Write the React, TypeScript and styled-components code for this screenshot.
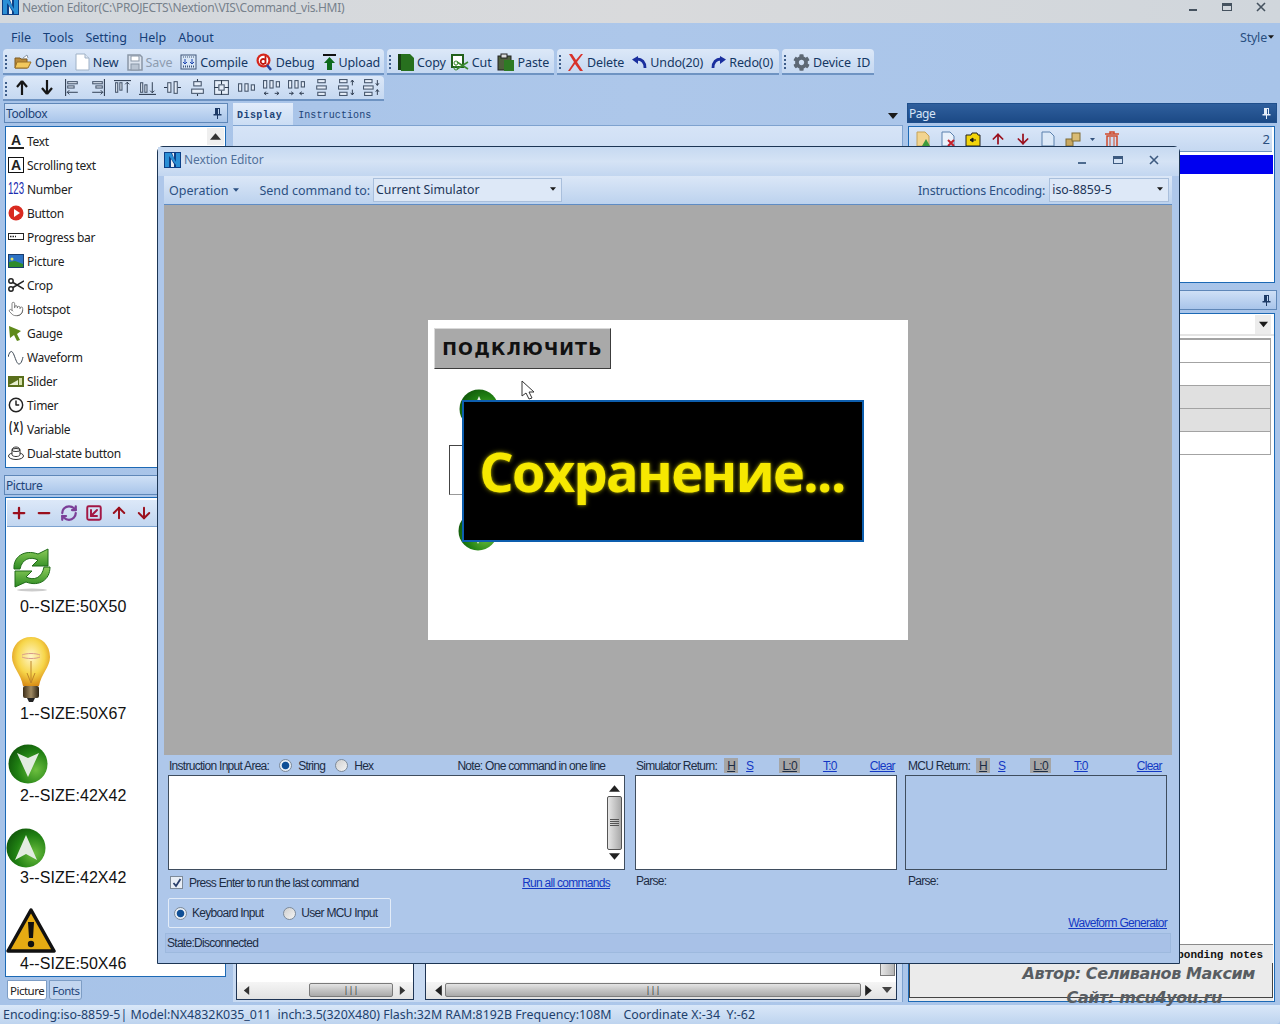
import React from 'react'
import styled, { createGlobalStyle } from 'styled-components'
import { ArrowDown, ArrowUp, Clock3, Minus, Plus, Pointer, RefreshCw, SquareArrowDownLeft } from 'lucide-react'
import { FaCog } from 'react-icons/fa'

const Global = createGlobalStyle`
  html, body { margin: 0; padding: 0; background: #a9c4e8; }
  * { box-sizing: border-box; }
`

const Root = styled.div`
  position: relative;
  width: 1280px;
  height: 1024px;
  overflow: hidden;
  display: flex;
  flex-direction: column;
  background: linear-gradient(90deg, #a7c3e8, #adc7ea 50%, #a8c4e9);
  font-family: 'Noto Sans', sans-serif;
  color: #15396f;
`

const TitleBar = styled.div`
  height: 23px;
  flex: none;
  display: flex;
  align-items: center;
  padding: 0 0 9px 2px;
  gap: 3px;
  line-height: 13px;
  background: linear-gradient(90deg, #d3d8dd, #d9dadc 50%, #d0d6dc);
  color: #77818c;
  font-size: 12px;
  letter-spacing: -0.32px;
`

const WinButtons = styled.div<{ $gap: number; $right?: number }>`
  margin-left: auto;
  margin-right: ${p => p.$right ?? 0}px;
  display: flex;
  align-items: center;
  gap: ${p => p.$gap}px;
`

const MenuBar = styled.div`
  height: 26px;
  flex: none;
  display: flex;
  align-items: center;
  padding: 2px 6px 0 11px;
  font-size: 12.5px;
  color: #153e78;
`

const MenuItem = styled.span`
  margin-right: 12px;
`

const StyleMenu = styled.span`
  margin-left: auto;
  font-size: 12.5px;
  letter-spacing: -0.2px;
  color: #2a4f80;
  display: flex;
  align-items: center;
  gap: 1px;
`

const ToolRow = styled.div`
  height: 27px;
  flex: none;
  display: flex;
  gap: 3px;
  padding-left: 3px;
`

const ToolGroup = styled.div<{ $width: number; $gap?: number }>`
  width: ${p => p.$width}px;
  height: 26px;
  display: flex;
  align-items: center;
  gap: ${p => p.$gap ?? 8}px;
  padding: 2px 0 0 11px;
  position: relative;
  border-radius: 4px 4px 0 0;
  border-bottom: 2px solid #6e93c2;
  background: linear-gradient(#dce8f8, #c5d8f1);
  font-size: 12.5px;
  color: #143763;
  letter-spacing: -0.12px;
  &::before {
    content: '';
    position: absolute;
    left: 2px;
    top: 6px;
    height: 14px;
    border-left: 2px dotted #3d5d8a;
  }
`

const ToolItem = styled.span<{ $muted?: boolean }>`
  display: flex;
  align-items: center;
  gap: 3px;
  white-space: pre;
  color: ${p => (p.$muted ? '#8d9cb0' : 'inherit')};
`

const AlignGroup = styled(ToolGroup)`
  gap: 0;
  padding: 0 0 0 7px;
  height: 25px;
`

const AlignSlot = styled.span`
  width: 25px;
  display: flex;
  justify-content: center;
`

const Dock = styled.div`
  flex: 1;
  min-height: 0;
  display: grid;
  grid-template-columns: 230px 1fr 373px;
`

const Column = styled.div`
  display: flex;
  flex-direction: column;
  min-height: 0;
`

const PanelHeader = styled.div<{ $active?: boolean }>`
  height: 20px;
  flex: none;
  display: flex;
  align-items: center;
  justify-content: space-between;
  padding: 0 5px 0 1px;
  border: 1px solid ${p => (p.$active ? '#1f4f8c' : '#5f87b8')};
  font-size: 12px;
  letter-spacing: -0.45px;
  color: ${p => (p.$active ? '#d5e4f7' : '#1d4478')};
  background: ${p => (p.$active ? 'linear-gradient(#2f5f9d, #1c4a86)' : 'linear-gradient(#cfe0f6, #a9c5ea)')};
`

const LeftColumn = styled(Column)`
  padding-left: 4px;
  padding-right: 2px;
`

const ToolboxList = styled.div`
  height: 342px;
  margin: 3px 2px 0 1px;
  flex: none;
  position: relative;
  padding-top: 2px;
  background: #fff;
  border: 1px solid #1c69b5;
`

const ScrollUp = styled.span`
  position: absolute;
  right: 1px;
  top: 1px;
  width: 17px;
  height: 17px;
  display: flex;
  align-items: center;
  justify-content: center;
  background: #efefef;
`

const ToolboxRow = styled.div`
  height: 24px;
  display: flex;
  align-items: center;
  gap: 3px;
  padding-left: 2px;
  font-size: 12px;
  letter-spacing: -0.3px;
  color: #222;
`

const IconSlot = styled.span`
  width: 16px;
  height: 16px;
  display: flex;
  align-items: center;
  justify-content: flex-start;
  flex: none;
`

const LetterIcon = styled.span<{ $boxed?: boolean }>`
  width: 16px;
  height: 16px;
  display: flex;
  align-items: center;
  justify-content: center;
  font-family: 'Liberation Sans', sans-serif;
  font-weight: 700;
  font-size: 14px;
  line-height: 13px;
  letter-spacing: 0;
  color: #222;
  border: ${p => (p.$boxed ? '1px solid #111' : '0')};
  border-bottom: ${p => (p.$boxed ? '1px solid #111' : '2px solid #222')};
`

const NarrowGlyphs = styled.span<{ $mono?: boolean; $color: string }>`
  flex: none;
  display: inline-block;
  width: 27px;
  margin-right: -11px;
  font-family: ${p => (p.$mono ? "'Liberation Mono', monospace" : "'Liberation Sans', sans-serif")};
  font-weight: ${p => (p.$mono ? 700 : 400)};
  font-size: ${p => (p.$mono ? 15 : 16)}px;
  line-height: 16px;
  letter-spacing: 0;
  color: ${p => p.$color};
  transform: scaleX(0.6);
  transform-origin: left center;
`

const PictureHeader = styled(PanelHeader)`
  margin-top: 7px;
`

const PicturePanel = styled.div`
  height: 480px;
  margin: 2px 2px 0 1px;
  flex: none;
  overflow: hidden;
  background: #fff;
  border: 1px solid #1c69b5;
`

const PictureTools = styled.div`
  height: 27px;
  margin: 2px 1px 0;
  display: flex;
  align-items: center;
  gap: 7px;
  padding-left: 3px;
  border-bottom: 1px solid #7da3d0;
  background: linear-gradient(#dce8f8, #c2d6f0);
`

const PictureItem = styled.div<{ $indent: number; $top: number }>`
  margin-top: ${p => p.$top}px;
  padding-left: ${p => p.$indent}px;
  svg { display: block; }
`

const PictureLabel = styled.div<{ $top: number; $indent: number }>`
  margin-top: ${p => p.$top}px;
  margin-left: ${p => p.$indent}px;
  font-family: 'Liberation Sans', sans-serif;
  font-size: 16px;
  line-height: 18px;
  letter-spacing: 0.05px;
  color: #111;
`

const BottomTabs = styled.div`
  display: flex;
  gap: 2px;
  margin: 3px 0 0 3px;
`

const BottomTab = styled.span<{ $active?: boolean }>`
  height: 20px;
  padding: 0 2px;
  display: flex;
  align-items: center;
  border: 1px solid #7d9dc5;
  border-radius: 0 0 3px 3px;
  font-size: 11.5px;
  letter-spacing: -0.5px;
  color: ${p => (p.$active ? '#222' : '#1d4478')};
  background: ${p => (p.$active ? '#fff' : '#c3d6ef')};
`

const MiddleColumn = styled(Column)`
  padding: 0 4px 3px 3px;
`

const TabStrip = styled.div`
  height: 22px;
  flex: none;
  display: flex;
  align-items: stretch;
  font-family: 'Liberation Mono', monospace;
  font-size: 10px;
  letter-spacing: 0.1px;
  position: relative;
`

const DocTab = styled.span<{ $active?: boolean }>`
  display: flex;
  align-items: center;
  padding: ${p => (p.$active ? '2px 11px 0 4px' : '2px 5px 0')};
  font-weight: ${p => (p.$active ? 700 : 400)};
  letter-spacing: ${p => (p.$active ? '0.45px' : '0.1px')};
  color: #1d4478;
  background: ${p => (p.$active ? 'linear-gradient(#e2ecfa, #cbddf4)' : 'transparent')};
`

const TabMenu = styled.span`
  position: absolute;
  right: 5px;
  top: 8px;
  display: flex;
`

const TabBody = styled.div`
  flex: 1;
  min-height: 0;
  display: flex;
  flex-direction: column;
  justify-content: flex-end;
  background: linear-gradient(#d6e4f7, #c8daf2 40px);
  border-top: 1px solid #7ea2cf;
  border-right: 1px solid #7ea2cf;
  padding-left: 3px;
`

const BottomPanes = styled.div`
  display: grid;
  grid-template-columns: 178px 472px;
  gap: 11px;
  margin-bottom: 2px;
  height: 120px;
`

const Pane = styled.div`
  position: relative;
  background: #fff;
  border: 1px solid #1f3555;
  border-top: 0;
`

const ScrollTrack = styled.div`
  position: absolute;
  left: 0;
  right: 0;
  bottom: 0;
  height: 17px;
  background: linear-gradient(#f5f5f5, #e2e2e2);
`

const HScroll = styled.div<{ $left: number; $right: number }>`
  position: absolute;
  left: ${p => p.$left}px;
  right: ${p => p.$right}px;
  bottom: 2px;
  height: 14px;
  display: flex;
  align-items: center;
  justify-content: center;
  border: 1px solid #7a7a7a;
  border-radius: 2px;
  background: linear-gradient(#e4e4e4, #c5c5c5 50%, #a9a9a9);
  font-size: 9px;
  line-height: 10px;
  color: #333;
`

const VScroll = styled.div`
  position: absolute;
  right: 1px;
  top: 0;
  bottom: 23px;
  width: 15px;
  border: 1px solid #7a7a7a;
  background: linear-gradient(90deg, #e6e6e6, #b5b5b5);
`

const ScrollArrow = styled.span<{ $left?: number; $right?: number; $bottom: number }>`
  position: absolute;
  bottom: ${p => p.$bottom}px;
  ${p => (p.$left !== undefined ? `left: ${p.$left}px;` : '')}
  ${p => (p.$right !== undefined ? `right: ${p.$right}px;` : '')}
  display: flex;
`

const RightColumn = styled(Column)`
  padding: 0 3px 3px 0;
`

const PageBody = styled.div`
  height: 157px;
  flex: none;
  margin: 3px 2px 0 1px;
  display: flex;
  flex-direction: column;
  background: #fff;
  border: 1px solid #1c69b5;
`

const PageTools = styled.div`
  height: 25px;
  flex: none;
  display: flex;
  align-items: center;
  gap: 9px;
  padding: 0 2px 0 6px;
  margin: 0 2px 3px 0;
  border-bottom: 1px solid #6e93c2;
  background: linear-gradient(#d9e6f8, #c5d8f1);
`

const PageCount = styled.span`
  margin-left: auto;
  font-size: 13px;
  color: #2a4f80;
`

const PageRow = styled.div`
  height: 19px;
  margin-right: 1px;
  background: #0000f0;
`

const AttrHeader = styled(PanelHeader)`
  margin-top: 7px;
`

const AttrBody = styled.div`
  flex: 1;
  min-height: 0;
  margin: 3px 2px 0 1px;
  display: flex;
  flex-direction: column;
  background: #fff;
  border: 1px solid #1c69b5;
`

const AttrCombo = styled.div`
  height: 22px;
  flex: none;
  display: flex;
  justify-content: flex-end;
  align-items: center;
  padding-right: 3px;
  border-bottom: 2px solid #e4e4e4;
`

const ComboArrow = styled.span`
  width: 16px;
  height: 19px;
  display: flex;
  align-items: center;
  justify-content: center;
  background: #ececec;
`

const AttrTable = styled.div`
  margin: 2px 3px 0 0;
  border: 1px solid #a3a3a3;
  border-top-width: 2px;
  border-bottom: 0;
`

const AttrRow = styled.div<{ $gray?: boolean }>`
  height: 23px;
  border-bottom: 1px solid #a3a3a3;
  background: ${p => (p.$gray ? '#e0e0e0' : '#fff')};
`

const NotesBox = styled.div`
  height: 56px;
  margin: auto 1px 0 0;
  flex: none;
  display: flex;
  flex-direction: column;
  position: relative;
  background: #ebebeb;
`

const NotesHead = styled.div`
  margin-top: -1px;
  padding: 4px 10px 0 0;
  height: 19px;
  text-align: right;
  border-top: 1px solid #8a8a8a;
  font-family: 'Liberation Mono', monospace;
  font-weight: 700;
  font-size: 11px;
  color: #111;
`

const NotesField = styled.div`
  flex: 1;
  margin-bottom: 3px;
  border-bottom: 1px solid #444;
  border-left: 1px solid #444;
  border-right: 1px solid #444;
`

const Watermark = styled.div<{ $right: number; $top: number }>`
  position: absolute;
  right: ${p => p.$right}px;
  top: ${p => p.$top}px;
  white-space: nowrap;
  font-family: 'DejaVu Sans', sans-serif;
  font-style: italic;
  font-weight: 700;
  font-size: 16px;
  letter-spacing: -0.4px;
  color: #585d62;
`

const StatusBar = styled.div`
  height: 19px;
  flex: none;
  display: flex;
  align-items: center;
  gap: 12px;
  padding-left: 3px;
  border-radius: 0 0 4px 0;
  background: linear-gradient(#d9e7f8, #bed4ef);
  font-size: 12.4px;
  color: #213f6c;
  white-space: pre;
`

const Dialog = styled.div`
  position: absolute;
  left: 157px;
  top: 146px;
  width: 1023px;
  height: 818px;
  display: flex;
  flex-direction: column;
  border: 1px solid #1c3554;
  border-radius: 6px 6px 0 0;
  background: #aec7ea;
  padding: 0 7px 0 6px;
`

const DialogTitle = styled.div`
  height: 29px;
  flex: none;
  margin: 0 -7px 0 -6px;
  padding: 0 20px 4px 6px;
  display: flex;
  align-items: center;
  gap: 3px;
  background: linear-gradient(#c6d9f1, #d5e3f5 50%, #c2d6f0);
  font-size: 12px;
  letter-spacing: -0.1px;
  color: #51719b;
`

const DialogTools = styled.div`
  height: 29px;
  flex: none;
  display: flex;
  align-items: center;
  padding: 0 3px 0 5px;
  border-bottom: 1px solid #5f8cc4;
  background: linear-gradient(#dbe7f7, #bcd2ee);
  font-size: 12.5px;
  color: #2b5082;
`

const Combo = styled.div<{ $width: number }>`
  width: ${p => p.$width}px;
  height: 24px;
  flex: none;
  display: flex;
  align-items: center;
  justify-content: space-between;
  padding: 0 5px 2px 2px;
  background: #dde8f7;
  border: 1px solid #a9bfdc;
  font-size: 12.3px;
  color: #1c3557;
`

const SpacedText = styled.span<{ $left?: number; $right?: number; $tight?: boolean }>`
  margin-left: ${p => p.$left ?? 0}px;
  margin-right: ${p => p.$right ?? 0}px;
  letter-spacing: ${p => (p.$tight ? '-0.2px' : '0')};
  white-space: nowrap;
  display: flex;
  align-items: center;
  gap: 5px;
`

const Canvas = styled.div`
  height: 550px;
  flex: none;
  display: flex;
  align-items: center;
  justify-content: center;
  background: #a9a9a9;
`

const Screen = styled.div`
  position: relative;
  width: 480px;
  height: 320px;
  background: #fff;
`

const ConnectButton = styled.div`
  position: absolute;
  left: 6px;
  top: 8px;
  width: 177px;
  height: 41px;
  display: flex;
  align-items: center;
  justify-content: center;
  white-space: nowrap;
  background: #a9a9a9;
  border: 1px solid #d9d9d9;
  border-right-color: #3c3c3c;
  border-bottom-color: #3c3c3c;
  font-family: 'DejaVu Sans', sans-serif;
  font-weight: 700;
  font-size: 17.5px;
  letter-spacing: 1.2px;
  color: #111;
`

const CanvasIcon = styled.div<{ $left: number; $top: number }>`
  position: absolute;
  left: ${p => p.$left}px;
  top: ${p => p.$top}px;
  line-height: 0;
`

const FieldBox = styled.div`
  position: absolute;
  left: 21px;
  top: 125px;
  width: 40px;
  height: 50px;
  border: 1px solid #444;
  border-right: 0;
  border-bottom-color: #999;
`

const SaveOverlay = styled.div`
  position: absolute;
  left: 34px;
  top: 80px;
  width: 402px;
  height: 142px;
  display: flex;
  align-items: center;
  justify-content: center;
  padding: 0 2px 1px 0;
  background: #000;
  border: 2px solid #0d5eae;
  font-family: 'Open Sans', sans-serif;
  font-weight: 700;
  font-size: 54px;
  letter-spacing: -1.6px;
  color: #f6e800;
  text-shadow: 0 0 5px #8d8a00, 0 0 2px #8d8a00;
`

const Lower = styled.div`
  flex: 1;
  min-height: 0;
  display: flex;
  padding: 3px 0 0 4px;
  font-family: 'Liberation Sans', sans-serif;
  font-size: 12px;
  letter-spacing: -0.72px;
  color: #1c2c44;
`

const LowerColumn = styled.div<{ $width: number; $left?: number }>`
  width: ${p => p.$width}px;
  margin-left: ${p => p.$left ?? 0}px;
  flex: none;
  display: flex;
  flex-direction: column;
  min-height: 0;
`

const AreaHead = styled.div<{ $pad?: number }>`
  height: 17px;
  flex: none;
  display: flex;
  align-items: center;
  white-space: nowrap;
  padding: 0 0 2px ${p => p.$pad ?? 1}px;
`

const Gap = styled.span<{ $width: number }>`
  width: ${p => p.$width}px;
  flex: none;
`

const Radio = styled.span<{ $checked?: boolean }>`
  width: 13px;
  height: 13px;
  flex: none;
  border-radius: 50%;
  border: 1px solid #7d8a99;
  background: ${p =>
    p.$checked ? 'radial-gradient(circle, #0f4f96 0 3.4px, #e6edf5 4.2px)' : 'linear-gradient(135deg, #cfcfcf, #f4f4f4)'};
`

const HeadLink = styled.span<{ $shade?: boolean; $left: number }>`
  margin-left: ${p => p.$left}px;
  padding: 0 ${p => (p.$shade ? 3 : 0)}px;
  height: 15px;
  display: inline-flex;
  align-items: center;
  text-decoration: underline;
  color: ${p => (p.$shade ? '#1c2c44' : '#1338c4')};
  background: ${p => (p.$shade ? '#a5a5a5' : 'transparent')};
`

const OutputBox = styled.div<{ $tinted?: boolean }>`
  height: 95px;
  flex: none;
  position: relative;
  border: 1px solid #3f4d5e;
  background: ${p => (p.$tinted ? '#aec7ea' : '#fff')};
`

const InputScroll = styled.div`
  position: absolute;
  right: 1px;
  top: 1px;
  bottom: 1px;
  width: 17px;
  display: flex;
  flex-direction: column;
  align-items: center;
  justify-content: space-between;
  padding: 6px 0;
`

const InputThumb = styled.div`
  width: 15px;
  height: 54px;
  display: flex;
  flex-direction: column;
  align-items: center;
  justify-content: center;
  gap: 1px;
  border: 1px solid #555;
  border-radius: 2px;
  background: linear-gradient(90deg, #e6e6e6, #a9a9a9);
  span {
    width: 9px;
    height: 1px;
    background: #555;
  }
`

const CheckRow = styled.div`
  margin-top: 4px;
  height: 17px;
  display: flex;
  align-items: center;
  padding: 0 15px 0 2px;
  gap: 6px;
`

const CheckBox = styled.span`
  width: 13px;
  height: 13px;
  flex: none;
  display: flex;
  align-items: center;
  justify-content: center;
  border: 1px solid #7d8a99;
  background: #e8eef6;
`

const BlueLink = styled.span`
  margin-left: auto;
  color: #1338c4;
  text-decoration: underline;
`

const InputMode = styled.div`
  margin-top: 7px;
  width: 223px;
  height: 30px;
  display: flex;
  align-items: center;
  padding-left: 5px;
  border: 1px solid #e3ecf8;
  border-radius: 2px;
`

const ModeLabel = styled.span`
  margin-left: 5px;
`

const ParseLabel = styled.div<{ $pad: number }>`
  margin-top: 4px;
  padding-left: ${p => p.$pad}px;
`

const WaveLink = styled(BlueLink)`
  margin-top: auto;
  margin-bottom: 3px;
`

const StateBar = styled.div`
  height: 20px;
  flex: none;
  margin: 0 0 10px 1px;
  width: 1006px;
  display: flex;
  align-items: center;
  padding-left: 1px;
  border: 1px solid #9db9de;
  background: #a8c1e7;
  font-family: 'Liberation Sans', sans-serif;
  font-size: 12px;
  letter-spacing: -0.72px;
  color: #1c2c44;
`

const Cursor = styled.svg`
  position: absolute;
  left: 93px;
  top: 60px;
`

/* icons */

const Logo = () => (
  <svg width="17" height="16" viewBox="0 0 17 16">
    <rect width="17" height="16" fill="#0c3f86" />
    <path d="M1 1h4v14H1zM12 1h4v14h-4z" fill="#2a8fd6" />
    <path d="M5 1h2l5 9v3L5 4z" fill="#2a8fd6" />
    <path d="M7 7l3 5v3H7zM8 1h2v5z" fill="#e8eef6" />
  </svg>
)

type Dir = 'up' | 'down' | 'left' | 'right'

const trianglePaths: Record<Dir, string> = {
  down: 'M0 2h10L5 8z',
  up: 'M0 8h10L5 2z',
  left: 'M8 0v10L2 5z',
  right: 'M2 0v10l6-5z',
}

const Triangle = ({ dir = 'down', size = 7, color = '#1a1a1a' }: { dir?: Dir; size?: number; color?: string }) => (
  <svg width={size} height={size} viewBox="0 0 10 10">
    <path d={trianglePaths[dir]} fill={color} />
  </svg>
)

const PinIcon = ({ color }: { color: string }) => (
  <svg width="9" height="12" viewBox="0 0 9 12">
    <path d="M2 1h5v6h1.500v1.500H5V12H4V8.500H.5V7H2zM5 2v5h1V2z" fill={color} />
  </svg>
)

const MinIcon = ({ color }: { color: string }) => (
  <svg width="10" height="10" viewBox="0 0 10 10">
    <rect x="1" y="7" width="8" height="2" fill={color} />
  </svg>
)

const MaxIcon = ({ color }: { color: string }) => (
  <svg width="10" height="10" viewBox="0 0 10 10">
    <rect x=".5" y="1.500" width="9" height="7" fill="none" stroke={color} />
    <rect x=".5" y="1.500" width="9" height="2.500" fill={color} />
  </svg>
)

const CloseIcon = ({ color }: { color: string }) => (
  <svg width="10" height="10" viewBox="0 0 10 10">
    <path d="M1 1l8 8M9 1L1 9" stroke={color} strokeWidth="1.600" />
  </svg>
)

const OpenIcon = () => (
  <svg width="18" height="16" viewBox="0 0 18 16">
    <path d="M1 4h5l1 1h6v9H1z" fill="#b98a3a" stroke="#7d5a22" />
    <path d="M3 8h14l-3 6H1z" fill="#f2c85c" stroke="#9a7026" />
    <path d="M9 4l4-3 1 3" fill="#fff" stroke="#8a97a7" />
  </svg>
)

const NewIcon = () => (
  <svg width="15" height="18" viewBox="0 0 15 18">
    <path d="M1 1h9l4 4v12H1z" fill="#fff" stroke="#9fb1c6" />
    <path d="M10 1v4h4" fill="#dfe7f1" stroke="#9fb1c6" />
  </svg>
)

const SaveIcon = () => (
  <svg width="16" height="17" viewBox="0 0 16 17">
    <path d="M1 1h12l2 2v13H1z" fill="#dbe3ee" stroke="#8a97a7" strokeWidth="1.500" />
    <rect x="4" y="2" width="8" height="5" fill="#fff" stroke="#8a97a7" />
    <rect x="4" y="10" width="8" height="6" fill="#b9c4d2" stroke="#8a97a7" />
  </svg>
)

const CompileIcon = () => (
  <svg width="17" height="16" viewBox="0 0 17 16">
    <rect x="1" y="1" width="15" height="14" fill="#d8e6f6" stroke="#41577b" />
    <path d="M3 3h11" stroke="#41577b" strokeDasharray="1 1" />
    <path d="M5 5v4M12 5v4M3 8l2 2 2-2M10 8l2 2 2-2" stroke="#1f47b0" fill="none" />
    <path d="M3 12.500h11" stroke="#41577b" strokeDasharray="1 1" strokeWidth="2" />
  </svg>
)

const DebugIcon = () => (
  <svg width="17" height="18" viewBox="0 0 17 18">
    <circle cx="7.500" cy="7.500" r="7" fill="#d5261c" />
    <circle cx="7.500" cy="7.500" r="4.800" fill="#fff" />
    <path d="M9.500 3v8M9.500 7.500a2.500 2.500 0 1 0 0 2" fill="none" stroke="#c3170f" strokeWidth="1.800" />
    <path d="M11 12l4 5" stroke="#24439e" strokeWidth="2.500" />
  </svg>
)

const UploadIcon = () => (
  <svg width="13" height="17" viewBox="0 0 13 17">
    <rect y="0" width="13" height="2" fill="#111" />
    <path d="M6.500 3L12 9H9v7H4V9H1z" fill="#0d6a1c" />
  </svg>
)

const CopyIcon = () => (
  <svg width="16" height="18" viewBox="0 0 16 18">
    <rect x="0" y="1" width="3" height="16" fill="#173f12" />
    <path d="M3 1h9l4 4v13H3z" fill="#27701e" />
  </svg>
)

const CutIcon = () => (
  <svg width="18" height="17" viewBox="0 0 18 17">
    <rect x="1" y="1" width="11" height="12" fill="#fff" stroke="#21601b" strokeWidth="2" />
    <path d="M6 8l11 7M6 15L17 8" stroke="#3b8a30" strokeWidth="1.500" />
    <circle cx="5" cy="14" r="2" fill="none" stroke="#3b8a30" />
    <circle cx="5" cy="9" r="2" fill="none" stroke="#3b8a30" />
  </svg>
)

const PasteIcon = () => (
  <svg width="18" height="18" viewBox="0 0 18 18">
    <rect x="1" y="3" width="13" height="14" fill="#4f5f3d" stroke="#222" />
    <rect x="4" y="1" width="6" height="4" fill="#ddd" stroke="#222" />
    <path d="M7 7h10v11H7z" fill="#2f7a24" />
  </svg>
)

const DeleteIcon = () => (
  <svg width="16" height="18" viewBox="0 0 16 18">
    <path d="M1 1l3 0 4 6 5-6h2L9 9l6 9h-3L7 11l-5 7H0l6-9z" fill="#d8322a" />
  </svg>
)

const UndoIcon = ({ flip }: { flip?: boolean }) => (
  <svg width="15" height="13" viewBox="0 0 15 13" style={flip ? undefined : { transform: 'scaleX(-1)' }}>
    <path d="M2 12C2 6 5 3 10 3" fill="none" stroke="#1a2f9e" strokeWidth="2.800" />
    <path d="M9 0l6 3.500L9 8z" fill="#1a2f9e" />
  </svg>
)

const GearIcon = () => <FaCog size={17} color="#5d6874" />

const UpBold = () => (
  <svg width="14" height="15" viewBox="0 0 14 15">
    <path d="M7 1l5 6M7 1L2 7M7 1v14" stroke="#161616" strokeWidth="2.200" fill="none" />
  </svg>
)

const DownBold = () => (
  <svg width="14" height="15" viewBox="0 0 14 15">
    <path d="M7 14l5-6M7 14L2 8M7 0v14" stroke="#161616" strokeWidth="2.200" fill="none" />
  </svg>
)

type AlignShape = { rects: [number, number, number, number][]; lines?: string; fine?: string }

const alignShapes: AlignShape[] = [
  { rects: [[3, 2, 10, 3], [3, 6, 7, 3]], lines: 'M1.500 0v16', fine: 'M3 12.500h10M3 12.500l2-2M3 12.500l2 2' },
  { rects: [[3, 2, 10, 3], [6, 6, 7, 3]], lines: 'M14.500 0v16', fine: 'M3 12.500h10M13 12.500l-2-2M13 12.500l-2 2' },
  { rects: [[1, 3, 3, 10], [5, 3, 3, 8]], lines: 'M0 1.500h16', fine: 'M12.500 3v10M12.500 3l-2 2M12.500 3l2 2' },
  { rects: [[1, 3, 3, 10], [5, 5, 3, 8]], lines: 'M0 14.500h16', fine: 'M12.500 3v10M12.500 13l-2-2M12.500 13l2-2' },
  { rects: [[3, 3, 4, 10], [9, 2, 4, 12]], lines: 'M0 8h3M13 8h3' },
  { rects: [[4, 2, 8, 5], [2, 9, 12, 5]], lines: 'M8 0v2M8 14v2' },
  { rects: [[1, 1, 14, 14], [5, 5, 6, 6]], lines: 'M8 1v4M8 11v4M1 8h4M11 8h4' },
  { rects: [[0, 4, 4, 8], [6, 4, 4, 8], [12, 5, 4, 6]] },
  { rects: [[0, 1, 4, 8], [6, 1, 4, 8], [12, 2, 4, 6]], fine: 'M1 13.500h4M1 13.500l2-1.500M1 13.500l2 1.500M11 13.500h4M15 13.500l-2-1.500M15 13.500l-2 1.500' },
  { rects: [[0, 1, 4, 8], [6, 1, 4, 8], [12, 2, 4, 6]], fine: 'M1 13.500h4M5 13.500l-2-1.500M5 13.500l-2 1.500M11 13.500h4M11 13.500l2-1.500M11 13.500l2 1.500' },
  { rects: [[4, 0, 8, 4], [3, 6, 10, 4], [4, 12, 8, 4]] },
  { rects: [[1, 0, 8, 4], [0, 6, 10, 4], [1, 12, 8, 4]], fine: 'M13.500 1v5M13.500 1l-1.500 2M13.500 1l1.500 2M13.500 10v5M13.500 15l-1.500-2M13.500 15l1.500-2' },
  { rects: [[1, 0, 8, 4], [0, 6, 10, 4], [1, 12, 8, 4]], fine: 'M13.500 1v5M13.500 6l-1.500-2M13.500 6l1.500-2M13.500 10v5M13.500 10l-1.500 2M13.500 10l1.500 2' },
]

const AlignIcon = ({ shape }: { shape: AlignShape }) => (
  <svg width="17" height="17" viewBox="0 0 16 16">
    {shape.rects.map(([x, y, w, h], i) => (
      <rect key={i} x={x + 0.5} y={y + 0.5} width={w - 1} height={h - 1} fill="#e6eef9" stroke="#46566c" />
    ))}
    {shape.lines && <path d={shape.lines} stroke="#2c3a4e" fill="none" />}
    {shape.fine && <path d={shape.fine} stroke="#2c3a4e" fill="none" strokeWidth=".9" />}
  </svg>
)

const ButtonIcon = () => (
  <svg width="16" height="16" viewBox="0 0 16 16">
    <circle cx="8" cy="8" r="7.500" fill="#d92a20" />
    <path d="M6 4l6 4-6 4z" fill="#fff" />
  </svg>
)

const BarIcon = () => (
  <svg width="16" height="8" viewBox="0 0 16 8">
    <rect x=".5" y=".5" width="15" height="6" fill="#fff" stroke="#222" />
    <path d="M2 3.500h6" stroke="#222" strokeWidth="1.500" strokeDasharray="1.500 1" />
  </svg>
)

const SceneIcon = () => (
  <svg width="16" height="14" viewBox="0 0 16 14">
    <rect width="16" height="14" fill="#1b3d6e" />
    <rect x="1" y="1" width="14" height="12" fill="#2d72c4" />
    <path d="M1 8l6-1 8 3v3H1z" fill="#2f8b2c" />
    <circle cx="4" cy="5" r="1.500" fill="#e4e46a" />
  </svg>
)

const CropIcon = () => (
  <svg width="16" height="14" viewBox="0 0 16 14">
    <circle cx="3" cy="3" r="2.200" fill="none" stroke="#222" strokeWidth="1.500" />
    <circle cx="3" cy="11" r="2.200" fill="none" stroke="#222" strokeWidth="1.500" />
    <path d="M5 4.500L16 11M5 9.500L16 3" stroke="#222" strokeWidth="1.500" />
  </svg>
)

const GaugeIcon = () => (
  <svg width="14" height="15" viewBox="0 0 14 15">
    <path d="M1 0l12 5-4 3 3 6-3 1-3-6-4 3z" fill="#5f8a1a" />
  </svg>
)

const WaveIcon = () => (
  <svg width="16" height="16" viewBox="0 0 16 16">
    <path d="M0 8C2 1 4 1 6 6s3 9 5 9 3-3 4-7" fill="none" stroke="#3f4a56" />
  </svg>
)

const SliderIcon = () => (
  <svg width="16" height="11" viewBox="0 0 16 11">
    <rect width="16" height="11" fill="#5a6f1c" />
    <path d="M1 9l9-5v5z" fill="#e8efd0" />
    <rect x="11" y="2" width="3" height="7" fill="#d6e0aa" />
  </svg>
)

const DualIcon = () => (
  <svg width="16" height="14" viewBox="0 0 16 14">
    <ellipse cx="8" cy="10" rx="7.500" ry="3.500" fill="#fff" stroke="#333" />
    <path d="M4 9V4c0-4 8-4 8 0v5c-1 2-7 2-8 0z" fill="#fff" stroke="#333" />
    <ellipse cx="8" cy="4" rx="4" ry="1.500" fill="none" stroke="#333" />
  </svg>
)

const RefreshPicture = () => (
  <svg width="40" height="44" viewBox="0 0 40 44">
    <defs>
      <linearGradient id="refreshGreen" x1="0" y1="0" x2="0" y2="1">
        <stop offset="0" stopColor="#8ccc5a" />
        <stop offset="1" stopColor="#2c8a22" />
      </linearGradient>
    </defs>
    <path d="M2 21C1 9 12 1 26 6l10-5v17H20l6-6C18 8 10 11 8 21z" fill="url(#refreshGreen)" stroke="#1f6b18" />
    <path d="M38 19c0 13-11 20-24 15l-11 5V23h17l-6 6c8 4 16 1 18-10z" fill="url(#refreshGreen)" stroke="#1f6b18" />
    <ellipse cx="20" cy="42" rx="15" ry="1.500" fill="#ccc" />
  </svg>
)

const BulbPicture = () => (
  <svg width="38" height="66" viewBox="0 0 38 66">
    <defs>
      <radialGradient id="bulbGlow" cx=".5" cy=".4" r=".65">
        <stop offset="0" stopColor="#fff6c8" />
        <stop offset=".55" stopColor="#f7d64a" />
        <stop offset="1" stopColor="#d47f0c" />
      </radialGradient>
      <linearGradient id="bulbBase" x1="0" y1="0" x2="1" y2="0">
        <stop offset="0" stopColor="#3c2d18" />
        <stop offset=".5" stopColor="#a08a62" />
        <stop offset="1" stopColor="#2c2212" />
      </linearGradient>
    </defs>
    <path d="M19 0C8 0 0 8 0 20c0 10 9 17 11 29h16c2-12 11-19 11-29C38 8 30 0 19 0z" fill="url(#bulbGlow)" />
    <path d="M10 18c4-2 14-2 18 0M10 20c4 2 14 2 18 0" fill="none" stroke="#d89a8a" />
    <path d="M19 24v22M15 36l4 10 4-10" fill="none" stroke="#c0852a" />
    <rect x="11" y="49" width="16" height="12" rx="2" fill="url(#bulbBase)" />
    <path d="M15 61h8l-2 4h-4z" fill="#222" />
  </svg>
)

const GreenDisc = ({ up, id, size = 40 }: { up?: boolean; id: string; size?: number }) => (
  <svg width={size} height={size} viewBox="0 0 40 40">
    <defs>
      <radialGradient id={id} cx=".7" cy=".65" r=".8">
        <stop offset="0" stopColor="#6dbf3f" />
        <stop offset=".6" stopColor="#1f7f12" />
        <stop offset="1" stopColor="#0f5209" />
      </radialGradient>
    </defs>
    <circle cx="20" cy="20" r="19.500" fill={`url(#${id})`} />
    <path d={up ? 'M20 7l11 25-11-6-11 6z' : 'M9 9l11 5 11-5-11 24z'} fill="#e2ece0" />
  </svg>
)

const WarningPicture = () => (
  <svg width="50" height="46" viewBox="0 0 50 46">
    <path d="M25 2L48 43H2z" fill="#e5ab13" stroke="#111" strokeWidth="3.500" strokeLinejoin="round" />
    <path d="M22 14h6l-1 16h-4z" fill="#111" />
    <circle cx="25" cy="36" r="3.200" fill="#111" />
  </svg>
)

const PageAdd = () => (
  <svg width="16" height="16" viewBox="0 0 16 16">
    <path d="M2 1h8l4 4v10H2z" fill="#f2d48f" stroke="#c4a25a" />
    <path d="M11 8l4 7H7z" fill="#3e9b3c" />
  </svg>
)

const PageDel = () => (
  <svg width="16" height="16" viewBox="0 0 16 16">
    <path d="M2 1h8l4 4v10H2z" fill="#e9f1fb" stroke="#5a80ad" />
    <path d="M8 9l6 6M14 9l-6 6" stroke="#c21f2a" strokeWidth="2" />
  </svg>
)

const PageFolder = () => (
  <svg width="16" height="16" viewBox="0 0 16 16">
    <path d="M1 4h5l1-2h5l1 2h2v11H1z" fill="#f2d40a" stroke="#222" />
    <path d="M5 9h6M5 9l3-2v4z" stroke="#222" />
  </svg>
)

const PageDoc = () => (
  <svg width="16" height="16" viewBox="0 0 16 16">
    <path d="M2 1h8l4 4v10H2z" fill="#dce9f8" stroke="#5a80ad" />
  </svg>
)

const PageCubes = () => (
  <svg width="16" height="16" viewBox="0 0 16 16">
    <rect x="1" y="8" width="7" height="7" fill="#c9a860" stroke="#7f6a33" />
    <rect x="7" y="2" width="8" height="8" fill="#d9bb74" stroke="#7f6a33" />
  </svg>
)

const PageTrash = () => (
  <svg width="16" height="16" viewBox="0 0 16 16">
    <path d="M1 3h14M6 3V1h4v2M3 5h10v11H3z" fill="none" stroke="#d0492b" strokeWidth="1.500" />
    <path d="M6 6v9M10 6v9" stroke="#d0492b" />
  </svg>
)

const mainTools: { width: number; gap?: number; items: { label: string; icon: React.ReactNode; muted?: boolean }[] }[] = [
  {
    width: 381,
    items: [
      { label: 'Open', icon: <OpenIcon /> },
      { label: 'New', icon: <NewIcon /> },
      { label: 'Save', icon: <SaveIcon />, muted: true },
      { label: 'Compile', icon: <CompileIcon /> },
      { label: 'Debug', icon: <DebugIcon /> },
      { label: 'Upload', icon: <UploadIcon /> },
    ],
  },
  {
    width: 167,
    gap: 5,
    items: [
      { label: 'Copy', icon: <CopyIcon /> },
      { label: 'Cut', icon: <CutIcon /> },
      { label: 'Paste', icon: <PasteIcon /> },
    ],
  },
  {
    width: 222,
    items: [
      { label: 'Delete', icon: <DeleteIcon /> },
      { label: 'Undo(20)', icon: <UndoIcon /> },
      { label: 'Redo(0)', icon: <UndoIcon flip /> },
    ],
  },
  { width: 92, items: [{ label: 'Device  ID', icon: <GearIcon /> }] },
]

const toolbox: { label: string; icon: React.ReactNode }[] = [
  { label: 'Text', icon: <LetterIcon>A</LetterIcon> },
  { label: 'Scrolling text', icon: <LetterIcon $boxed>A</LetterIcon> },
  { label: 'Number', icon: <NarrowGlyphs $color="#1a2cb0">123</NarrowGlyphs> },
  { label: 'Button', icon: <ButtonIcon /> },
  { label: 'Progress bar', icon: <BarIcon /> },
  { label: 'Picture', icon: <SceneIcon /> },
  { label: 'Crop', icon: <CropIcon /> },
  { label: 'Hotspot', icon: <Pointer size={16} color="#666" strokeWidth={1.2} /> },
  { label: 'Gauge', icon: <GaugeIcon /> },
  { label: 'Waveform', icon: <WaveIcon /> },
  { label: 'Slider', icon: <SliderIcon /> },
  { label: 'Timer', icon: <Clock3 size={16} color="#222" strokeWidth={2.2} /> },
  { label: 'Variable', icon: <NarrowGlyphs $mono $color="#222">(X)</NarrowGlyphs> },
  { label: 'Dual-state button', icon: <DualIcon /> },
]

const ReturnHead = ({ title, gaps, pad }: { title: string; gaps: number[]; pad: number }) => (
  <AreaHead $pad={pad}>
    {title}
    <HeadLink $shade $left={gaps[0]}>H</HeadLink>
    <HeadLink $left={gaps[1]}>S</HeadLink>
    <HeadLink $shade $left={gaps[2]}>L:0</HeadLink>
    <HeadLink $left={gaps[3]}>T:0</HeadLink>
    <HeadLink $left={gaps[4]}>Clear</HeadLink>
  </AreaHead>
)

export default function App() {
  return (
    <Root>
      <Global />
      <TitleBar>
        <Logo />
        Nextion Editor(C:\PROJECTS\Nextion\VIS\Command_vis.HMI)
        <WinButtons $gap={24} $right={14}>
          <MinIcon color="#45525f" />
          <MaxIcon color="#45525f" />
          <CloseIcon color="#45525f" />
        </WinButtons>
      </TitleBar>

      <MenuBar>
        <MenuItem>File</MenuItem>
        <MenuItem>Tools</MenuItem>
        <MenuItem>Setting</MenuItem>
        <MenuItem>Help</MenuItem>
        <MenuItem>About</MenuItem>
        <StyleMenu>
          Style
          <Triangle size={6} />
        </StyleMenu>
      </MenuBar>

      <ToolRow>
        {mainTools.map((group, i) => (
          <ToolGroup key={i} $width={group.width} $gap={group.gap}>
            {group.items.map(item => (
              <ToolItem key={item.label} $muted={item.muted}>
                {item.icon}
                {item.label}
              </ToolItem>
            ))}
          </ToolGroup>
        ))}
      </ToolRow>

      <ToolRow>
        <AlignGroup $width={381}>
          <AlignSlot><UpBold /></AlignSlot>
          <AlignSlot><DownBold /></AlignSlot>
          {alignShapes.map((shape, i) => (
            <AlignSlot key={i}><AlignIcon shape={shape} /></AlignSlot>
          ))}
        </AlignGroup>
      </ToolRow>

      <Dock>
        <LeftColumn>
          <PanelHeader>
            Toolbox
            <PinIcon color="#1d3a66" />
          </PanelHeader>
          <ToolboxList>
            <ScrollUp><Triangle dir="up" size={11} color="#333" /></ScrollUp>
            {toolbox.map(item => (
              <ToolboxRow key={item.label}>
                <IconSlot>{item.icon}</IconSlot>
                {item.label}
              </ToolboxRow>
            ))}
          </ToolboxList>

          <PictureHeader>Picture</PictureHeader>
          <PicturePanel>
            <PictureTools>
              <Plus size={18} color="#9a0f1c" strokeWidth={3} />
              <Minus size={18} color="#9a0f1c" strokeWidth={3} />
              <RefreshCw size={18} color="#7b3f98" strokeWidth={3} />
              <SquareArrowDownLeft size={18} color="#a31744" strokeWidth={2.6} />
              <ArrowUp size={18} color="#9a0f1c" strokeWidth={2.6} />
              <ArrowDown size={18} color="#9a0f1c" strokeWidth={2.6} />
            </PictureTools>
            <PictureItem $indent={6} $top={21}>
              <RefreshPicture />
              <PictureLabel $top={6} $indent={8}>0--SIZE:50X50</PictureLabel>
            </PictureItem>
            <PictureItem $indent={6} $top={21}>
              <BulbPicture />
              <PictureLabel $top={2} $indent={8}>1--SIZE:50X67</PictureLabel>
            </PictureItem>
            <PictureItem $indent={2} $top={21}>
              <GreenDisc id="discDown" />
              <PictureLabel $top={3} $indent={12}>2--SIZE:42X42</PictureLabel>
            </PictureItem>
            <PictureItem $indent={0} $top={23}>
              <GreenDisc id="discUp" up />
              <PictureLabel $top={1} $indent={14}>3--SIZE:42X42</PictureLabel>
            </PictureItem>
            <PictureItem $indent={0} $top={21}>
              <WarningPicture />
              <PictureLabel $top={1} $indent={14}>4--SIZE:50X46</PictureLabel>
            </PictureItem>
          </PicturePanel>
          <BottomTabs>
            <BottomTab $active>Picture</BottomTab>
            <BottomTab>Fonts</BottomTab>
          </BottomTabs>
        </LeftColumn>

        <MiddleColumn>
          <TabStrip>
            <DocTab $active>Display</DocTab>
            <DocTab>Instructions</DocTab>
            <TabMenu><Triangle size={10} /></TabMenu>
          </TabStrip>
          <TabBody>
            <BottomPanes>
              <Pane>
                <ScrollTrack />
                <HScroll $left={72} $right={20}>|||</HScroll>
                <ScrollArrow $left={5} $bottom={4}><Triangle dir="left" size={9} color="#333" /></ScrollArrow>
                <ScrollArrow $right={6} $bottom={4}><Triangle dir="right" size={9} color="#333" /></ScrollArrow>
              </Pane>
              <Pane>
                <ScrollTrack />
                <VScroll />
                <HScroll $left={19} $right={35}>|||</HScroll>
                <ScrollArrow $left={7} $bottom={3}><Triangle dir="left" size={11} color="#222" /></ScrollArrow>
                <ScrollArrow $right={22} $bottom={3}><Triangle dir="right" size={11} color="#222" /></ScrollArrow>
                <ScrollArrow $right={4} $bottom={4}><Triangle size={10} color="#444" /></ScrollArrow>
              </Pane>
            </BottomPanes>
          </TabBody>
        </MiddleColumn>

        <RightColumn>
          <PanelHeader $active>
            Page
            <PinIcon color="#e6eef9" />
          </PanelHeader>
          <PageBody>
            <PageTools>
              <PageAdd />
              <PageDel />
              <PageFolder />
              <ArrowUp size={16} color="#9a0f1c" strokeWidth={2.6} />
              <ArrowDown size={16} color="#9a0f1c" strokeWidth={2.6} />
              <PageDoc />
              <PageCubes />
              <Triangle size={5} color="#33527d" />
              <PageTrash />
              <PageCount>2</PageCount>
            </PageTools>
            <PageRow />
          </PageBody>
          <AttrHeader>
            Attribute
            <PinIcon color="#1d3a66" />
          </AttrHeader>
          <AttrBody>
            <AttrCombo>
              <ComboArrow><Triangle size={9} /></ComboArrow>
            </AttrCombo>
            <AttrTable>
              <AttrRow />
              <AttrRow />
              <AttrRow $gray />
              <AttrRow $gray />
              <AttrRow />
            </AttrTable>
            <NotesBox>
              <NotesHead>Corresponding notes</NotesHead>
              <NotesField />
            </NotesBox>
          </AttrBody>
        </RightColumn>
      </Dock>

      <StatusBar>
        <span>Encoding:iso-8859-5| Model:NX4832K035_011  inch:3.5(320X480) Flash:32M RAM:8192B Frequency:108M</span>
        <span>Coordinate X:-34  Y:-62</span>
      </StatusBar>

      <Dialog>
        <DialogTitle>
          <Logo />
          Nextion Editor
          <WinButtons $gap={26}>
            <MinIcon color="#4d6b8f" />
            <MaxIcon color="#3d5a80" />
            <CloseIcon color="#3d5a80" />
          </WinButtons>
        </DialogTitle>
        <DialogTools>
          <SpacedText>
            Operation
            <Triangle size={6} color="#2b5082" />
          </SpacedText>
          <SpacedText $left={20} $right={3}>Send command to:</SpacedText>
          <Combo $width={189}>
            Current Simulator
            <Triangle size={6} />
          </Combo>
          <SpacedText $left={356} $right={4} $tight>Instructions Encoding:</SpacedText>
          <Combo $width={120}>
            iso-8859-5
            <Triangle size={6} />
          </Combo>
        </DialogTools>
        <Canvas>
          <Screen>
            <ConnectButton>ПОДКЛЮЧИТЬ</ConnectButton>
            <CanvasIcon $left={31} $top={69}><GreenDisc id="screenUp" up /></CanvasIcon>
            <FieldBox />
            <CanvasIcon $left={30} $top={191}><GreenDisc id="screenDown" /></CanvasIcon>
            <Cursor width="14" height="20" viewBox="0 0 14 20">
              <path d="M1 1v15l4-3 3 6 3-1-3-6h5z" fill="#fff" stroke="#333" />
            </Cursor>
            <SaveOverlay>Сохранение...</SaveOverlay>
          </Screen>
        </Canvas>
        <Lower>
          <LowerColumn $width={457}>
            <AreaHead>
              Instruction Input Area:
              <Gap $width={10} />
              <Radio $checked />
              <Gap $width={6} />
              String
              <Gap $width={10} />
              <Radio />
              <Gap $width={6} />
              Hex
              <Gap $width={84} />
              Note: One command in one line
            </AreaHead>
            <OutputBox>
              <InputScroll>
                <Triangle dir="up" size={11} color="#222" />
                <InputThumb><span /><span /><span /><span /></InputThumb>
                <Triangle size={11} color="#222" />
              </InputScroll>
            </OutputBox>
            <CheckRow>
              <CheckBox>
                <svg width="10" height="10" viewBox="0 0 10 10">
                  <path d="M1.500 5l2.500 3 4.500-7" fill="none" stroke="#2a3f6b" strokeWidth="1.800" />
                </svg>
              </CheckBox>
              Press Enter to run the last command
              <BlueLink>Run all commands</BlueLink>
            </CheckRow>
            <InputMode>
              <Radio $checked />
              <ModeLabel>Keyboard Input</ModeLabel>
              <Gap $width={20} />
              <Radio />
              <ModeLabel>User MCU Input</ModeLabel>
            </InputMode>
          </LowerColumn>
          <LowerColumn $width={262} $left={10}>
            <ReturnHead title="Simulator Return:" gaps={[7, 8, 26, 23, 33]} pad={1} />
            <OutputBox />
            <ParseLabel $pad={1}>Parse:</ParseLabel>
          </LowerColumn>
          <LowerColumn $width={262} $left={8}>
            <ReturnHead title="MCU Return:" gaps={[6, 8, 25, 23, 49]} pad={3} />
            <OutputBox $tinted />
            <ParseLabel $pad={3}>Parse:</ParseLabel>
            <WaveLink>Waveform Generator</WaveLink>
          </LowerColumn>
        </Lower>
        <StateBar>State:Disconnected</StateBar>
      </Dialog>

      <Watermark $right={25} $top={964}>Автор: Селиванов Максим</Watermark>
      <Watermark $right={58} $top={988}>Сайт: mcu4you.ru</Watermark>
    </Root>
  )
}
